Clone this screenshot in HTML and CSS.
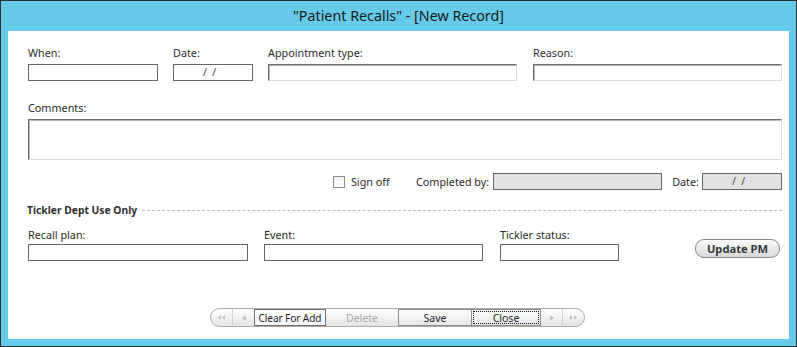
FILE: index.html
```html
<!DOCTYPE html>
<html>
<head>
<meta charset="utf-8">
<link rel="stylesheet" href="styles.css">
</head>
<body>
<div class="window">
  <div class="titlebar">"Patient Recalls" - [New Record]</div>
  <div class="content">
    <div class="row row-top">
      <div class="field f-when"><div class="lbl">When:</div><div class="box"></div></div>
      <div class="field f-date"><div class="lbl">Date:</div><div class="box date">/&nbsp;&nbsp;/</div></div>
      <div class="field f-appt"><div class="lbl">Appointment type:</div><div class="box sunken"></div></div>
      <div class="field f-reason"><div class="lbl">Reason:</div><div class="box sunken"></div></div>
    </div>
    <div class="field f-comments"><div class="lbl">Comments:</div><div class="box sunken memo"></div></div>
    <div class="signrow">
      <span class="check"></span>
      <span class="txt t-sign">Sign off</span>
      <span class="txt t-comp">Completed by:</span>
      <div class="box grey b-comp"></div>
      <span class="txt t-date">Date:</span>
      <div class="box grey b-date date">/&nbsp;&nbsp;/</div>
    </div>
    <div class="section-head"><span class="sec-title">Tickler Dept Use Only</span><span class="dash"></span></div>
    <div class="row row-tickler">
      <div class="field f-recall"><div class="lbl">Recall plan:</div><div class="box"></div></div>
      <div class="field f-event"><div class="lbl">Event:</div><div class="box"></div></div>
      <div class="field f-status"><div class="lbl">Tickler status:</div><div class="box"></div></div>
      <button class="pill">Update PM</button>
    </div>
    <div class="nav">
      <div class="seg s-first"><svg width="7" height="5" viewBox="0 0 7 5"><path d="M3 0L0 2.5L3 5ZM7 0L4 2.5L7 5Z"/></svg></div>
      <div class="seg s-prev"><svg width="4" height="6" viewBox="0 0 4 6"><path d="M4 0L0 3L4 6Z"/></svg></div>
      <div class="seg s-btn s-clear">Clear For Add</div>
      <div class="seg s-btn s-delete">Delete</div>
      <div class="seg s-btn s-save">Save</div>
      <div class="seg s-btn s-close"><span class="focus">Close</span></div>
      <div class="seg s-next"><svg width="4" height="6" viewBox="0 0 4 6"><path d="M0 0L4 3L0 6Z"/></svg></div>
      <div class="seg s-last"><svg width="7" height="5" viewBox="0 0 7 5"><path d="M0 0L3 2.5L0 5ZM4 0L7 2.5L4 5Z"/></svg></div>
    </div>
  </div>
</div>
</body>
</html>
```
FILE: styles.css
```css
* { box-sizing: border-box; }
html, body { margin: 0; padding: 0; background: #ffffff; }
body {
  font-family: "Noto Sans", "Open Sans", sans-serif;
  color: #262626;
}
.window {
  width: 797px;
  height: 347px;
  border: 1px solid #2e2e2e;
  background: #66caea;
  display: flex;
  flex-direction: column;
}
.titlebar {
  height: 30px;
  line-height: 29px;
  text-align: center;
  font-size: 14.3px;
  color: #1a1a1a;
}
.content {
  margin: 0 7px 7px 7px;
  height: 308px;
  background: #ffffff;
  padding: 15px 7px 12px 20px;
  display: flex;
  flex-direction: column;
}
.row { display: flex; align-items: flex-start; }
.field { display: flex; flex-direction: column; }
.lbl {
  height: 14px;
  line-height: 14px;
  font-size: 10.8px;
  margin-bottom: 4px;
  white-space: nowrap;
  color: #2a2a2a;
}
.box {
  height: 17px;
  border: 1px solid #656565;
  background: #ffffff;
}
.box.sunken {
  border-top-color: #6e6e6e;
  border-left-color: #6e6e6e;
  border-right-color: #dcdcdc;
  border-bottom-color: #dcdcdc;
  box-shadow: inset 1px 1px 0 #b4b4b4;
}
.box.grey { background: #e1e1e1; }
.box.date {
  font-size: 10.5px;
  line-height: 15px;
  padding-left: 29px;
  color: #444;
  white-space: nowrap;
}
.f-when { width: 130px; }
.f-date { width: 80px; margin-left: 15px; }
.f-appt { width: 249px; margin-left: 15px; }
.f-reason { width: 249px; margin-left: 16px; }
.f-comments { margin-top: 20px; }
.memo { height: 41px; }

.signrow {
  margin-top: 13px;
  height: 17px;
  display: flex;
  align-items: center;
  justify-content: flex-end;
}
.check {
  width: 12px;
  height: 12px;
  border: 1px solid #8c8c8c;
  background: linear-gradient(#f0f0f0, #ffffff);
}
.txt { font-size: 10.8px; white-space: nowrap; color: #2a2a2a; }
.t-sign { margin-left: 6px; width: 65px; }
.t-comp { margin-right: 4px; }
.b-comp { width: 169px; }
.t-date { margin-left: 10px; margin-right: 3px; }
.b-date { width: 80px; padding-left: 25px; }

.section-head {
  margin-top: 13px;
  margin-left: -1px;
  height: 14px;
  display: flex;
  align-items: center;
}
.sec-title {
  font-size: 10.3px;
  font-weight: bold;
  color: #303030;
  white-space: nowrap;
  line-height: 14px;
}
.dash {
  flex: 1;
  margin-left: 5px;
  border-top: 1px dashed #bcbcbc;
}
.row-tickler { margin-top: 11px; }
.row-tickler .lbl { margin-bottom: 2px; }
.f-recall { width: 220px; }
.f-event { width: 219px; margin-left: 16px; }
.f-status { width: 119px; margin-left: 17px; }
.pill {
  margin-left: auto;
  margin-right: 2px;
  margin-top: 11px;
  width: 85px;
  height: 19px;
  padding: 0;
  border: 1px solid #8a8a8a;
  border-radius: 9px;
  background: linear-gradient(#fbfbfb, #e9e9e9 50%, #d9d9d9);
  font-family: "Noto Sans", sans-serif;
  font-size: 11.2px;
  font-weight: bold;
  color: #3a3a3a;
  line-height: 16px;
}

.nav {
  margin-top: auto;
  margin-left: 182px;
  align-self: flex-start;
  display: flex;
  width: 375px;
  height: 19px;
  border: 1px solid #aaaaaa;
  border-radius: 10px;
  background: linear-gradient(#ffffff, #f2f2f2 50%, #e4e4e4);
  overflow: hidden;
}
.seg {
  height: 100%;
  display: flex;
  align-items: center;
  justify-content: center;
  font-size: 10.5px;
  white-space: nowrap;
  color: #1e1e1e;
}
.seg svg { fill: #c2c2c2; display: block; }
.s-first { width: 22px; border-right: 1px solid #cfcfcf; }
.s-prev { width: 21px; }
.s-btn { width: 72px; }
.s-clear { border: 1px solid #6f6f6f; background: linear-gradient(#ffffff, #f6f6f6); font-size: 10.1px; letter-spacing: -0.1px; }
.s-delete { color: #a9a9a9; }
.s-save { width: 73px; border: 1px solid #8d8d8d; border-right: none; }
.s-close { width: 70px; border: 1px solid #8d8d8d; padding: 1px; }
.focus {
  width: 100%;
  height: 100%;
  border: 1px dotted #111;
  display: flex;
  align-items: center;
  justify-content: center;
}
.s-next { width: 22px; border-right: 1px solid #cfcfcf; }
.s-last { width: 21px; }
```
